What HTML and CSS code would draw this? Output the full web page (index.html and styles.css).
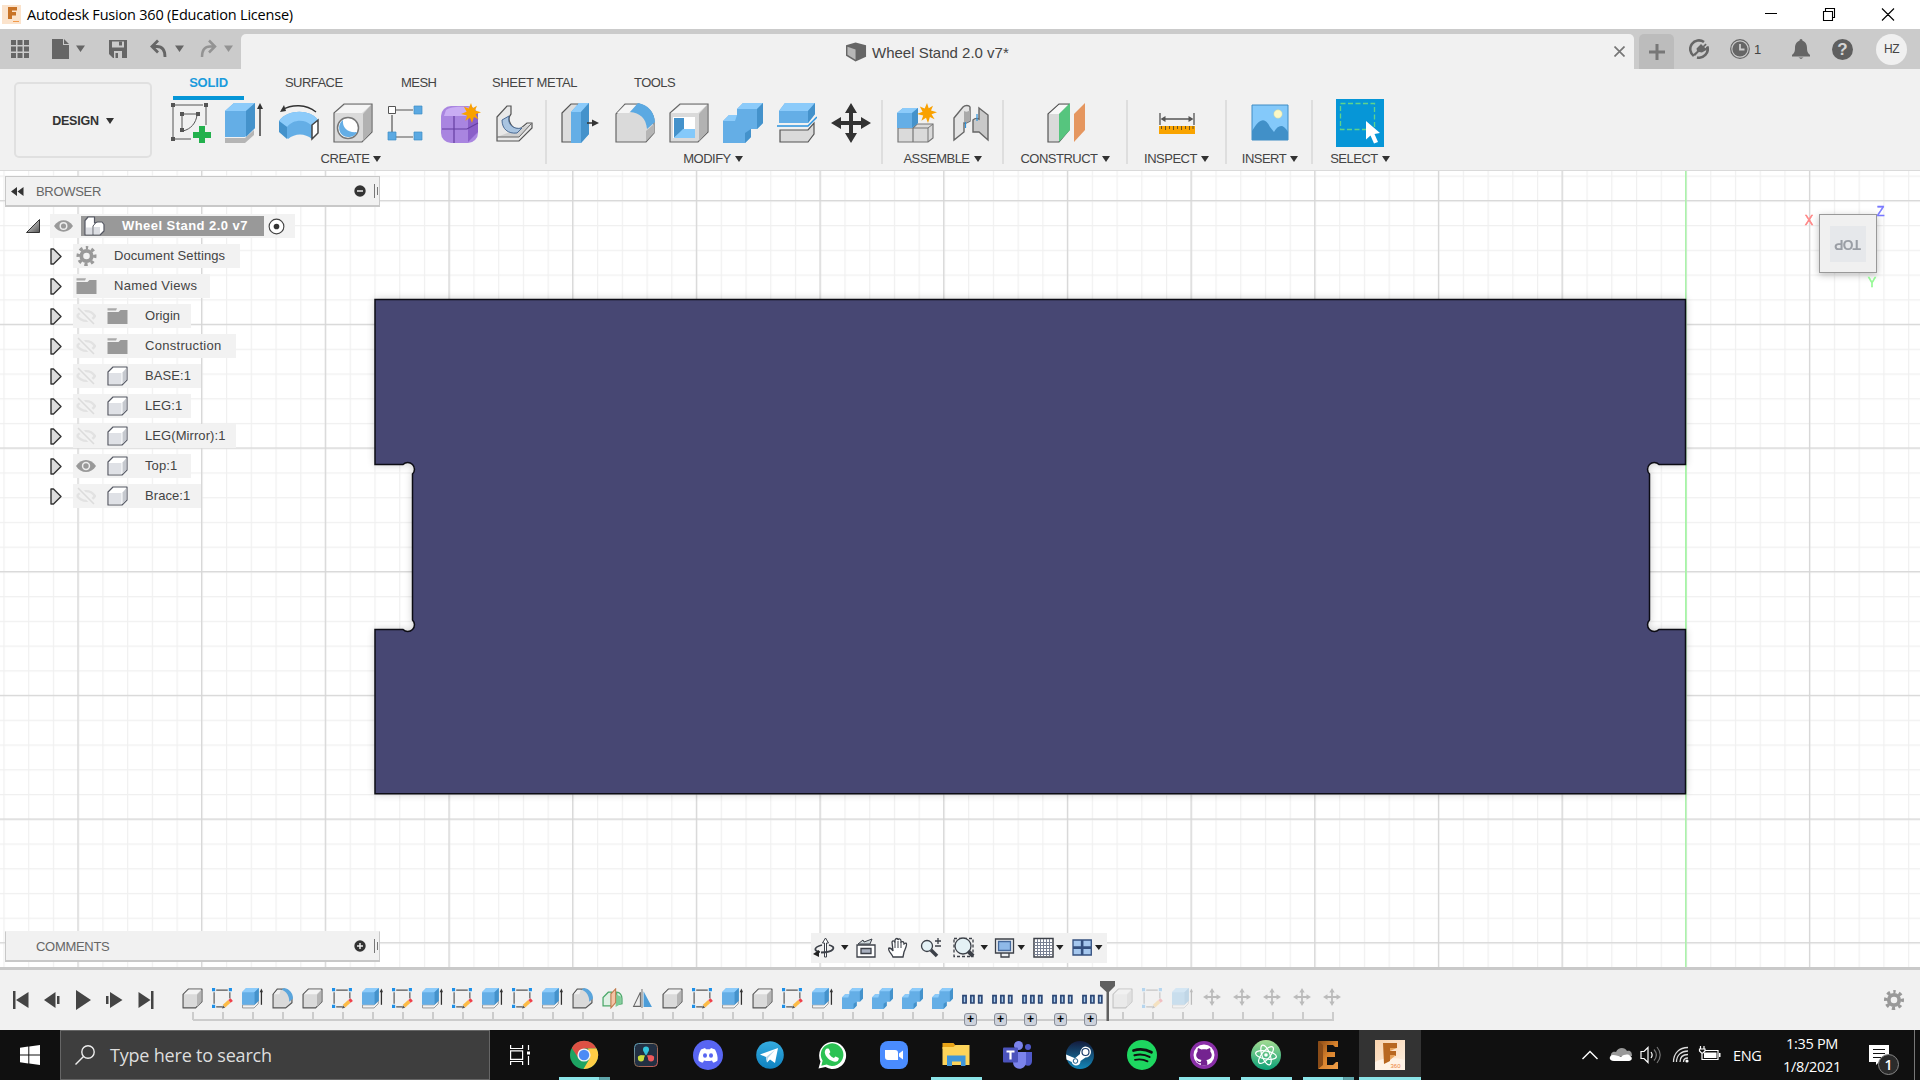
FILE: index.html
```html
<!DOCTYPE html>
<html lang="en">
<head>
<meta charset="utf-8">
<title>Autodesk Fusion 360 (Education License)</title>
<link rel="stylesheet" href="styles.css">
</head>
<body>
<svg class="defs" aria-hidden="true">
  <defs>
    <linearGradient id="gTri" x1="0" y1="0" x2="1" y2="1"><stop offset="0" stop-color="#eee"/><stop offset="1" stop-color="#555"/></linearGradient>
    <linearGradient id="gF" x1="0" y1="0" x2="1" y2="1"><stop offset="0" stop-color="#f9d3ae"/><stop offset="1" stop-color="#fdf0e2"/></linearGradient>
    <linearGradient id="gE" x1="0" y1="0" x2="1" y2="1"><stop offset="0" stop-color="#8a4a16"/><stop offset=".5" stop-color="#d8822c"/><stop offset="1" stop-color="#f0a04a"/></linearGradient>
    <linearGradient id="gTele" x1="0" y1="0" x2="0" y2="1"><stop offset="0" stop-color="#35ace0"/><stop offset="1" stop-color="#0f82c0"/></linearGradient>
    <linearGradient id="gSteam" x1="0" y1="0" x2="0" y2="1"><stop offset="0" stop-color="#141b3c"/><stop offset="1" stop-color="#1387b8"/></linearGradient>
    <linearGradient id="gAtom" x1="0" y1="0" x2="0" y2="1"><stop offset="0" stop-color="#a5dc92"/><stop offset="1" stop-color="#0aa077"/></linearGradient>
    <linearGradient id="gDv" x1="0" y1="0" x2="1" y2="1"><stop offset="0" stop-color="#5ba7c4"/><stop offset=".5" stop-color="#8a6a50"/><stop offset="1" stop-color="#d05a5a"/></linearGradient>
  </defs>
  <symbol id="star" viewBox="0 0 20 20"><path fill="#f9a100" d="M10 0l1.700 5.200L16 2.800l-2 4.600 6 1.800-5.400 2.100 3 4.900-4.700-2.200L11 20l-2-5.200-4.600 3 1.800-5.200L0 11l5.600-2.200L2.800 3.600l4.900 2z"/></symbol>
  <symbol id="t-box" viewBox="0 0 20 20"><path fill="#dadada" stroke="#555" stroke-width="1.100" stroke-linejoin="round" d="M1 6l5-5h13v12l-6 6H1z"/><path fill="#f3f3f3" d="M2 6l4.500-4.500h12L14 6z"/><path fill="#b5b5b5" d="M14.300 6.300l4.200-4.300v11l-4.200 5z"/></symbol>
  <symbol id="t-sketch" viewBox="0 0 20 20"><path fill="none" stroke="#555" stroke-width="1.100" d="M4 2h11M2 4v11M17 4v6M4 18h6"/><path fill="#1c8fe8" d="M0 0h3v3H0zM16 0h3v3h-3zM0 16h3v3H0z"/><path stroke="#fdbb45" stroke-width="3.400" d="M11.500 17.300l5-4.500"/><path stroke="#f0414b" stroke-width="3.400" d="M16.600 12.800l2.200-1.800"/><path fill="#555" d="M9.500 19.500l1-3 2 2.200z"/></symbol>
  <symbol id="t-ext" viewBox="0 0 20 20"><path fill="#f2f2f2" stroke="#888" stroke-width=".8" d="M.5 16h11l4-4v3l-4 4H.5z"/><path fill="#64aee6" d="M0 4l4-4h12v12l-4 4H0z"/><path fill="#8ccbfa" d="M0 4l4-4h12l-4 4z"/><path fill="#4492cb" d="M12 4l4-4v12l-4 4z"/><path stroke="#333" stroke-width="1.200" d="M18.500 3v13"/><path fill="#333" d="M16.800 4l1.700-3.500L20 4z"/></symbol>
  <symbol id="t-fillet" viewBox="0 0 20 20"><path fill="#dadada" stroke="#555" stroke-width="1.100" d="M1 6l4-5h6c5 1 8 5 8 9v4l-6 5H1z"/><path fill="#f0f0f0" d="M1.800 6l3.500-4.300h3L7 6z"/><path fill="#5aa5dc" d="M9 1.500L11.500 0C17 1 20 5 20 10l-3.500 3c0-5-2.500-9.500-7.500-11.500z"/></symbol>
  <symbol id="t-plane" viewBox="0 0 20 20"><path fill="#dff0e4" stroke="#4aa869" stroke-width="1.200" d="M1 17V9l5-5h3v13zM14 16V4c3 0 5 3 5 6v5z"/><path fill="#7ccb96" d="M13 6l5 2v7l-5 3z"/><path fill="#f4c4a6" stroke="#c07a4c" d="M8.500 5.500L13 .8v13L8.500 19z"/></symbol>
  <symbol id="t-mirror" viewBox="0 0 20 20"><path fill="#eee" stroke="#666" d="M8 4v13.500H1.500z"/><path fill="#4d9dd8" d="M11 3l8 15h-8z"/><path stroke="#777" d="M9.500 1v18"/></symbol>
  <symbol id="t-comb" viewBox="0 0 20 20"><path fill="#64aee6" d="M0 9l3-3h4V3l3-3h10v10l-3 3h-3v4l-3 3H0z"/><path fill="#8ccbfa" d="M7 3l3-3h10l-3 3zM0 9l3-3h4l-1 3z"/><path fill="#4492cb" d="M17 3l3-3v10l-3 3zM11 15l3-2v4l-3 3z"/></symbol>
  <symbol id="t-pat" viewBox="0 0 20 20"><path fill="#a9cdf0" stroke="#2c4674" stroke-width="1.600" d="M.9 7.300h3v7h-3zM8.400 7.300h3v7h-3zM15.900 7.300h3v7h-3z"/></symbol>
  <symbol id="t-move" viewBox="0 0 40 40"><path fill="#333" d="M20 0l6 10h-4v8h8v-4l10 6-10 6v-4h-8v8h4l-6 10-6-10h4v-8h-8v4L0 20l10-6v4h8v-8h-4z"/></symbol>
  <symbol id="eye" viewBox="0 0 20 14"><path fill="#999" d="M0 7c5-8 15-8 20 0-5 8-15 8-20 0z"/><circle cx="10" cy="7" r="4.200" fill="#eee"/><circle cx="10" cy="7" r="2.700" fill="#999"/></symbol>
  <symbol id="eyeoff" viewBox="0 0 20 18"><path fill="none" stroke="#e2e2e2" stroke-width="2.400" d="M1 9c4-6 13-7 18 0-4 6-12 7-18 0"/><path stroke="#f2f2f2" stroke-width="5" d="M2 1l16 16"/><path stroke="#dcdcdc" stroke-width="1.600" d="M2 1l16 16"/></symbol>
  <symbol id="folder" viewBox="0 0 20 16"><path fill="#999" d="M0 4h11l2-2h7v14H0z"/><path fill="#aaa" d="M0 .2h9.500L8.500 2.500H0z"/></symbol>
  <symbol id="gear" viewBox="0 0 20 20"><path fill="none" stroke="#999" stroke-width="3.400" stroke-dasharray="3.300 3.300" stroke-dashoffset="1.650" d="M10 1.700a8.300 8.300 0 1 1 0 16.600a8.300 8.300 0 1 1 0-16.600"/><circle cx="10" cy="10" r="5.200" fill="none" stroke="#999" stroke-width="3.800"/></symbol>
  <symbol id="comp" viewBox="0 0 21 20"><path fill="#fff" stroke="#555863" stroke-width="1.200" stroke-linejoin="round" d="M1 6l5-5h14v13l-5 5H1z"/><path fill="#dfe1e6" d="M2 7h12.500v11H2z"/><path fill="#c6c9cf" d="M15.500 6.500L19.400 2v12l-3.900 4z"/></symbol>
  <symbol id="tri" viewBox="0 0 12 17"><path fill="#ddd" stroke="#333" stroke-width="1.400" stroke-linejoin="round" d="M1 1h2.500L11 8.500 3.500 16H1z"/></symbol>
</svg>

<header class="titlebar">
  <svg class="app-icon" viewBox="0 0 19 19"><rect width="19" height="19" fill="#fbe3cc"/><path fill="#c87327" d="M6 2h9v3.500h-5V7h4v3.500h-4V14H6z"/><path stroke="#f29a4a" d="M11 16.500h6"/></svg>
  <span class="app-title">Autodesk Fusion 360 (Education License)</span>
  <svg class="win-buttons" width="130" height="14" viewBox="0 0 130 14"><path fill="none" stroke="#000" stroke-width="1.100" d="M0 6.500h12M58.500 4.500h9v9h-9zM60.500 4V1.500h9v9H68M117 1.500l12 12M129 1.500l-12 12"/></svg>
</header>

<div class="strip">
  <div class="quick">
    <svg width="242" height="40" viewBox="0 0 242 40"><g fill="#666"><path d="M11 11h5v5h-5zM17.500 11h5v5h-5zM24 11h5v5h-5zM11 17.500h5v5h-5zM17.500 17.500h5v5h-5zM24 17.500h5v5h-5zM11 24h5v5h-5zM17.500 24h5v5h-5zM24 24h5v5h-5z"/><path d="M52 10h11v6h6v14H52zM64 10l5 5h-5z"/><path d="M76 16.500h9l-4.500 6.500zM175 16.500h9l-4.500 6.500z"/><path fill-rule="evenodd" d="M109 11h18v18h-14l-4-4zM112 12.500v6h12v-6zM114 22v7h8v-7z"/><path d="M115.500 24h2.500v5h-2.500zM119 12.500h3v4h-3z"/></g><path fill="none" stroke="#666" stroke-width="2.800" d="M158 11.500l-6 6 6 6M152 17.500h5c6 0 8 4 8 10.500"/><g opacity=".55"><path fill="none" stroke="#666" stroke-width="2.500" d="M209 11.500l6 6-6 6M215 17.500h-5c-6 0-8 4-8 10.500"/><path fill="#666" d="M224 16.500h9l-4.500 6.500z"/></g></svg>
  </div>
  <div class="doc-tab">
    <svg width="21" height="20" viewBox="0 0 22 20"><path fill="#666" d="M0 3l10-3 11 3v12l-11 5L0 14z"/><path fill="#b7b7b7" d="M1.500 4.500l8.500 3v10.500l-8.500-5z"/></svg>
    <span>Wheel Stand 2.0 v7*</span>
    <svg class="tab-close" width="11" height="11" viewBox="0 0 11 11"><path stroke="#777" stroke-width="1.700" d="M.5.5l10 10M10.500.5l-10 10"/></svg>
  </div>
  <div class="add-tab"><svg width="16" height="16" viewBox="0 0 16 16"><path stroke="#777" stroke-width="3" d="M8 0v16M0 8h16"/></svg></div>
  <div class="account">
    <svg class="ic-ext" width="20" height="20" viewBox="0 0 20 20"><path fill="none" stroke="#666" stroke-width="2.600" d="M4.800 17A8.600 8.600 0 1 1 15 3M18.300 7.500A8.600 8.600 0 0 1 8 18.400"/><path fill="#666" d="M7.500 9.500L12 5l2 2 2.500-2.500 1.200 1.200L15.200 8l1.200 1.200 2-2 1 1.300-2 2.500-4.500 2.500-3-.5L6 17l-2-1.500 4-3.500z"/></svg>
    <svg class="ic-clock" width="20" height="20" viewBox="0 0 20 20"><circle cx="10" cy="10" r="9.300" fill="none" stroke="#666" stroke-width="1.200"/><circle cx="10" cy="10" r="7.600" fill="#666"/><path fill="none" stroke="#ccc" stroke-width="1.800" d="M10 5v5.500h4.500"/></svg>
    <span class="jobs">1</span>
    <svg class="ic-bell" width="18" height="20" viewBox="0 0 18 20"><path fill="#666" d="M9 0c1 0 1.500.8 1.500 1.800C14 3 15 6 15 9c0 4 1 5 3 7v1.500H0V16c2-2 3-3 3-7 0-3 1-6 4.500-7.200C7.500.800 8 0 9 0zM6.500 18.500h5L9 20z"/></svg>
    <span class="help">?</span>
    <span class="avatar">HZ</span>
  </div>
</div>

<div class="ribbon">
  <div class="workspace">DESIGN<i class="caret"></i></div>
  <div class="ribbon-main">
    <nav class="tabs"><b class="tab solid">SOLID</b><span class="tab surface">SURFACE</span><span class="tab mesh">MESH</span><span class="tab sheet">SHEET METAL</span><span class="tab">TOOLS</span></nav>
    <div class="groups">
      <section class="group create">
        <div class="tools">
          <svg viewBox="0 0 40 40"><path fill="none" stroke="#555" d="M4 2h28M2 4v30M35 4v18M4 36h16M11 13v12M13 11h12M26 12c-1 8-6 14-14 16"/><path fill="#555" d="M0 0h4v4H0zM33 0h4v4h-4zM0 34h4v4H0zM9 9h4v4H9zM25 9h4v4h-4zM9 25h4v4H9z"/><path stroke="#23b14d" stroke-width="6" d="M31 23v18M22 32h18"/></svg>
          <svg viewBox="0 0 40 40"><path fill="#b5b5b5" d="M0 35h20l9-8v5l-9 8H0z"/><path fill="#64aee6" d="M0 8l9-8h21v25l-10 9H0z"/><path fill="#8ccbfa" d="M0 8l9-8h21l-9 8z"/><path fill="#4492cb" d="M21 8l9-8v25l-9 9z"/><path stroke="#333" stroke-width="1.400" d="M35 3v30"/><path fill="#333" d="M32 6l3-6 3 6z"/></svg>
          <svg viewBox="0 0 40 40"><path fill="none" stroke="#333" stroke-width="1.400" d="M3 7C13 1 27 1 37 9"/><path fill="#333" d="M1 9l4-7 2 6z"/><path fill="#64aee6" d="M0 18C9 6 31 6 39 17l-6 19c-7-6-17-6-24 0l-9-8z"/><path fill="#8ccbfa" d="M0 18C9 6 31 6 39 17l-7 5c-6-6-18-6-24 2z"/><path fill="#4492cb" d="M0 18l8 6v12l-8-7z"/><path fill="#fff" stroke="#444" stroke-width="1.500" d="M33 22l6-5v13l-6 6z"/></svg>
          <svg viewBox="0 0 40 40"><path fill="#dadada" stroke="#666" stroke-width="1.200" d="M1 10L11 1h28v28L29 39H1z"/><path fill="#f5f5f5" d="M2 10L12 2h26l-9 8z"/><path fill="#b2b2b2" d="M30 11l8-9v27l-8 9z"/><circle cx="15" cy="25" r="10.500" fill="#fff" stroke="#777" stroke-width="1.500"/><path fill="#64aee6" d="M10 17c-1 8 5 13 14 12-2 4-5 5-9 5-9 0-12-12-5-17z"/></svg>
          <svg viewBox="0 0 40 40"><path stroke="#555" stroke-width="1.200" d="M9 7h17M5 12v17M9 34h17"/><path fill="#fff" stroke="#555" d="M1.500 3.500h7v7h-7z"/><path fill="#5ba9e2" stroke="#3e8cc4" stroke-width=".7" d="M27 3h8v8h-8zM1 29h8v8H1zM27 29h8v8h-8z"/></svg>
          <svg viewBox="0 0 40 40"><rect x="0" y="3" width="37" height="37" rx="10" fill="#a985e0"/><path fill="#c9adf3" d="M5 7c5-4 18-4 25-2l-5 8H3z"/><path fill="#8a5fc9" d="M27 14l10-5v20l-10 10z"/><path fill="none" stroke="#653ea0" stroke-width="1.200" d="M1 26h25l11-6M13 13v27"/><use href="#star" x="20" y="0" width="20" height="20"/></svg>
          <svg viewBox="0 0 40 40"><path fill="#e8e8e8" stroke="#555" stroke-width="1.200" d="M2 14L12 3h4v8c-5 6 1 16 9 15l7-6h5v5L24 38H2z"/><path fill="#d0d0d0" stroke="#666" d="M2 34h22l12-13"/><path fill="#a9c4e0" stroke="#4b6b94" d="M7 17c0 9 6 14 15 13l5-5c-9 2-15-4-13-12z"/></svg>
        </div>
        <div class="label">CREATE<i class="caret"></i></div>
      </section>
      <section class="group modify">
        <div class="tools">
          <svg viewBox="0 0 40 40"><path fill="#ddd" stroke="#555" stroke-width="1.200" d="M1 10l9-9h7v38H1z"/><path fill="#64aee6" d="M10 9l8-9h10v31l-8 9H10z"/><path fill="#8ccbfa" d="M10 9l8-9h10l-8 9z"/><path fill="#4492cb" d="M20 9l8-9v31l-8 9z"/><path stroke="#333" stroke-width="1.500" d="M26 20h7"/><path fill="#333" d="M31 16.500l7 3.500-7 3.500z"/></svg>
          <svg viewBox="0 0 40 40"><path fill="#dadada" stroke="#666" stroke-width="1.200" d="M1 11L10 1h14c10 3 15 10 15 18v11l-8 9H1z"/><path fill="#f5f5f5" d="M2 10l8-8h12l-8 8z"/><path fill="#b5b5b5" d="M31 28l8-7v9l-8 8z"/><path fill="#5ba9e2" d="M15 9l8-9c10 2 16 8 17 19l-8 7c-1-11-7-16-17-17z"/></svg>
          <svg viewBox="0 0 40 40"><path fill="#dadada" stroke="#666" stroke-width="1.200" d="M1 10L11 1h28v28L29 39H1z"/><path fill="#f5f5f5" d="M2 10L12 2h26l-9 8z"/><path fill="#b2b2b2" d="M30 11l8-9v27l-8 9z"/><path fill="#fff" d="M4 14h22v21H4z"/><path fill="#4492cb" d="M5 15h10v11L5 35z"/><path fill="#84c9fa" d="M5 35l9-9h12v9z"/></svg>
          <svg viewBox="0 0 20 20"><use href="#t-comb"/></svg>
          <svg viewBox="0 0 40 40"><path fill="#64aee6" d="M2 8l6-8h30v11l-7 9H2z"/><path fill="#8ccbfa" d="M2 8l6-8h30l-7 8z"/><path fill="#4492cb" d="M31 8l7-8v11l-7 9z"/><path fill="none" stroke="#2d93dd" stroke-width="1.500" d="M0 23h31l9-9"/><path fill="#dadada" stroke="#555" stroke-width="1.200" d="M3 27h28l6-7v11l-6 8H3z"/></svg>
          <svg viewBox="0 0 40 40"><use href="#t-move"/></svg>
        </div>
        <div class="label">MODIFY<i class="caret"></i></div>
      </section>
      <section class="group assemble">
        <div class="tools">
          <svg viewBox="0 0 40 40"><path fill="#dadada" stroke="#777" stroke-width="1.200" d="M1 25h15v14H1zM16 25l4-4h16v14l-5 4H16z"/><path fill="none" stroke="#777" d="M16 25h15l5-4M31 25v14"/><path fill="#64aee6" d="M0 10l6-5h15v15l-6 5H0z"/><path fill="#8ccbfa" d="M0 10l6-5h15l-6 5z"/><path fill="#4492cb" d="M15 10l6-5v15l-6 5z"/><use href="#star" x="20" y="0" width="20" height="20"/></svg>
          <svg viewBox="0 0 40 40"><path fill="#e4e4e4" stroke="#666" stroke-width="1.400" d="M3 15l9-11c2-2 6-2 7 0v14l-4 2h-2v9L3 37z"/><path fill="#aaa" d="M13 8c2 1 4 1 6-1v11l-4 2-2-1z"/><path fill="#c9c9c9" stroke="#666" stroke-width="1.400" d="M28 5l9 7v25l-9-8h-6V17c2-2 4-2 6-1z"/><path stroke="#2d93dd" stroke-width="1.200" d="M14.500 19v6M26 11v7"/></svg>
        </div>
        <div class="label">ASSEMBLE<i class="caret"></i></div>
      </section>
      <section class="group construct">
        <div class="tools"><svg viewBox="0 0 40 40"><path fill="#dadada" stroke="#555" stroke-width="1.200" d="M1 11L12 1h10v26L12 39H1z"/><path fill="#f8f8f8" d="M2 11L12 2h9l-9 9z"/><path fill="#56c57e" d="M12 11L23 0v27L12 39z"/><path fill="#e5965f" d="M27 11L38 0v27L27 39z"/></svg></div>
        <div class="label">CONSTRUCT<i class="caret"></i></div>
      </section>
      <section class="group inspect">
        <div class="tools"><svg viewBox="0 0 40 40"><path stroke="#555" stroke-width="1.300" d="M3 10v12M37 10v12M5 16h30"/><path fill="#555" d="M3.500 16l5-3v6zM36.500 16l-5-3v6z"/><path fill="#f9a400" d="M2 23h36v8H2z"/><path stroke="#6d5320" d="M4.500 23v3M8.500 23v4M12.500 23v3M16.500 23v4M20.500 23v3M24.500 23v4M28.500 23v3M32.500 23v4M36 23v3"/></svg></div>
        <div class="label">INSPECT<i class="caret"></i></div>
      </section>
      <section class="group insert">
        <div class="tools"><svg viewBox="0 0 40 40"><path fill="#84c9fa" stroke="#3e8cc4" d="M2 2h36v35H2z"/><circle cx="28" cy="11" r="4.200" fill="#fcf8c6" stroke="#cfd6a0" stroke-width=".5"/><path fill="#4190c8" d="M2 28c7-12 13-15 18-4l4 5c4-7 9-9 14 0v8H2z"/></svg></div>
        <div class="label">INSERT<i class="caret"></i></div>
      </section>
      <section class="group select">
        <div class="tools"><svg class="select-icon" viewBox="0 0 48 48"><path fill="#0696d7" d="M0 0h48v48H0z"/><path fill="none" stroke="#5fd38b" stroke-width="1.300" stroke-dasharray="5 2.500" d="M4.500 4.500h34v26h-34z"/><path fill="#fff" d="M30 22l14 12-5.500 1 3.500 8-4 1.500-3.500-8-4.500 4z"/></svg></div>
        <div class="label">SELECT<i class="caret"></i></div>
      </section>
    </div>
  </div>
</div>

<main class="viewport">
  <svg class="scene" width="1920" height="796" viewBox="0 0 1920 796">
    <defs>
      <pattern id="minor" x="77.600" y="29.300" width="24.736" height="24.736" patternUnits="userSpaceOnUse"><path fill="#f0f0f0" d="M0 0h24.736v1.200H0zM0 0h1.200v24.736H0z"/></pattern>
      <pattern id="major" x="77.400" y="29.100" width="123.680" height="123.680" patternUnits="userSpaceOnUse"><path fill="#d6d6d6" d="M0 0h123.680v1.300H0zM0 0h1.300v123.680H0z"/></pattern>
      <filter id="soft" x="-5%" y="-5%" width="110%" height="110%"><feGaussianBlur stdDeviation="4"/></filter>
    </defs>
    <path fill="url(#minor)" d="M0 0h1920v796H0z"/>
    <path fill="url(#major)" d="M0 0h1920v796H0z"/>
    <path stroke="#a6f5a6" stroke-width="1.400" d="M1685.800 0v796"/>
    <path filter="url(#soft)" fill="#000" opacity=".22" d="M375 128.500H1685.500V293.500H1659A6 6 0 1 0 1649.500 303V449A6 6 0 1 0 1659 458.500H1685.500V622.700H375V458.500H403A6 6 0 1 0 412.500 449V303A6 6 0 1 0 403 293.500H375z"/>
    <path stroke="#a6f5a6" stroke-width="1.400" d="M1685.800 293v166"/>
    <path fill="#474773" stroke="#0c0c14" stroke-width="1.500" d="M375 128.500H1685.500V293.500H1659A6 6 0 1 0 1649.500 303V449A6 6 0 1 0 1659 458.500H1685.500V622.700H375V458.500H403A6 6 0 1 0 412.500 449V303A6 6 0 1 0 403 293.500H375z"/>
  </svg>

  <div class="panel browser">
    <svg width="13" height="9" viewBox="0 0 13 9"><path fill="#333" d="M6 0v9L0 4.500zM12.500 0v9l-6-4.500z"/></svg><span>BROWSER</span>
    <svg class="pm" width="24" height="14" viewBox="0 0 24 14"><circle cx="6" cy="7" r="5.700" fill="#333"/><path stroke="#eee" stroke-width="1.500" d="M3 7h6"/><path stroke="#777" d="M20.500 0v14M23.500 3v8"/></svg>
  </div>
  <div class="tree">
    <div class="row root"><svg class="open" viewBox="0 0 14 14"><path fill="url(#gTri)" stroke="#333" d="M13.500.5v13H.5z"/></svg><div class="cell"><svg class="eye" viewBox="0 0 20 14"><use href="#eye"/></svg><div class="picked"><svg width="21" height="20" viewBox="0 0 21 20"><path fill="#fff" stroke="#555863" stroke-width="1.200" stroke-linejoin="round" d="M1 4.500L4 1h6.500v6l3-1H18l2 2.500V15l-4 4H1z"/><path fill="#dcdee3" d="M2 11.500h6.500v6.500H2zM10 11h6v7h-6z"/><path fill="none" stroke="#555863" d="M9 19v-9l3-3.500"/></svg><b>Wheel Stand 2.0 v7</b></div><svg class="radio" viewBox="0 0 18 18"><circle cx="9" cy="9" r="7.800" fill="#fff" stroke="#444" stroke-width="1.200"/><circle cx="9" cy="9" r="3" fill="#333"/></svg></div></div>
    <div class="row w167"><svg class="tri"><use href="#tri"/></svg><div class="cell"><svg class="ic20"><use href="#gear"/></svg><span>Document Settings</span></div></div>
    <div class="row w137"><svg class="tri"><use href="#tri"/></svg><div class="cell"><svg class="ic16"><use href="#folder"/></svg><span class="wide">Named Views</span></div></div>
    <div class="row w118"><svg class="tri"><use href="#tri"/></svg><div class="cell"><svg class="off"><use href="#eyeoff"/></svg><svg class="ic16"><use href="#folder"/></svg><span>Origin</span></div></div>
    <div class="row w163"><svg class="tri"><use href="#tri"/></svg><div class="cell"><svg class="off"><use href="#eyeoff"/></svg><svg class="ic16"><use href="#folder"/></svg><span class="wide">Construction</span></div></div>
    <div class="row w128"><svg class="tri"><use href="#tri"/></svg><div class="cell"><svg class="off"><use href="#eyeoff"/></svg><svg class="ic20"><use href="#comp"/></svg><span>BASE:1</span></div></div>
    <div class="row w118"><svg class="tri"><use href="#tri"/></svg><div class="cell"><svg class="off"><use href="#eyeoff"/></svg><svg class="ic20"><use href="#comp"/></svg><span>LEG:1</span></div></div>
    <div class="row w163"><svg class="tri"><use href="#tri"/></svg><div class="cell"><svg class="off"><use href="#eyeoff"/></svg><svg class="ic20"><use href="#comp"/></svg><span>LEG(Mirror):1</span></div></div>
    <div class="row w118"><svg class="tri"><use href="#tri"/></svg><div class="cell"><svg class="off"><use href="#eye"/></svg><svg class="ic20"><use href="#comp"/></svg><span>Top:1</span></div></div>
    <div class="row w128"><svg class="tri"><use href="#tri"/></svg><div class="cell"><svg class="off"><use href="#eyeoff"/></svg><svg class="ic20"><use href="#comp"/></svg><span>Brace:1</span></div></div>
  </div>

  <div class="panel comments">
    <span>COMMENTS</span>
    <svg class="pm" width="24" height="14" viewBox="0 0 24 14"><circle cx="6" cy="7" r="5.700" fill="#333"/><path stroke="#eee" stroke-width="1.500" d="M3 7h6M6 4v6"/><path stroke="#777" d="M20.500 0v14M23.500 3v8"/></svg>
  </div>

  <div class="navbar">
    <svg width="296" height="30" viewBox="0 0 296 30">
      <g fill="none" stroke="#3c4048" stroke-width="1.300"><path d="M13.500 24V10h-2l3-5 3 5h-2v14z" fill="#fff" stroke-width="1"/><path d="M11 12c-8 2-9 6-2 7M18 12c8 2 5 7-8 7.500" stroke-width="1.800"/><path fill="#fff" d="M46 12h18v12H46z"/><path fill="#cfd8dc" d="M47 11l5-4 1 2 8-3-2 5z" stroke-width="1"/><path fill="#a9b0bf" d="M50 15.500h10v5H50z"/><path fill="#fff" d="M82 24c-1-3-6-7-4-9 2 0 3 1 4 3l-1-9c1-2 3-1 3 1V7c1-2 3-2 3 0 1-2 3-1 3 1v1c2-1 3 0 3 2l2-1c2 1-1 6-2 9l-1 5z"/><path stroke-width="1" d="M84 10v5M87 8v7M90 9v6"/><circle cx="116" cy="13" r="5.500" fill="#e4f1f5"/><path stroke-width="3.500" d="M120 17l6 6"/><path d="M124 8h6M127 5v6M124 13h6"/><path stroke-dasharray="3 2" d="M143 5.500h19v18h-19z"/><circle cx="152" cy="13" r="8" fill="#e4f1f5"/><path stroke-width="4" d="M157 18l5 5"/><path fill="#eef0f3" d="M184.500 6h18v14h-18zM190 20v4h8v-4"/><path fill="#8fb9e8" stroke="#45699c" d="M187.500 8.500h12v9h-12z"/><path fill="#fff" stroke-width="1.500" d="M223 5.500h19v18.500h-19z"/><path stroke-width="1" stroke="#788092" d="M226.500 6v17M229.500 6v17M232.500 6v17M235.500 6v17M238.500 6v17M223 9.500h18M223 12.500h18M223 15.500h18M223 18.500h18M223 21.500h18"/><path fill="#a5c7ee" stroke="#34507f" stroke-width="1.300" d="M262 7h8.500v7H262zM271.800 7h8.500v7h-8.500zM262 15.300h8.500V22H262zM271.800 15.300h8.500V22h-8.500z"/></g>
      <path fill="#222" d="M8 17l-6 4 6 3zM30 12h7.500l-3.700 5zM169.500 12h7.500l-3.700 5zM206.500 12h7.500l-3.700 5zM245 12h7.500l-3.700 5zM284 12h7.500l-3.700 5z"/>
    </svg>
  </div>

  <div class="viewcube"><div class="face">TOP</div><span class="ax x">X</span><span class="ax y">Y</span><span class="ax z">Z</span></div>
</main>

<div class="timeline">
  <svg class="playback" width="150" height="20" viewBox="0 0 150 20"><path fill="#444" d="M0 1h2.500v18H0zM15.500 2v16L3 10zM42.500 2v16L31 10zM44 6h2.500v8H44zM63 0v20l15-10zM93 6h2.500v8H93zM97 2v16l12.500-8zM125.500 2v16l12-8zM138 1h2.500v18H138z"/></svg>
  <div class="track">
    <div class="step"><svg><use href="#t-box"/></svg></div><div class="step"><svg><use href="#t-sketch"/></svg></div><div class="step"><svg><use href="#t-ext"/></svg></div><div class="step"><svg><use href="#t-fillet"/></svg></div><div class="step"><svg><use href="#t-box"/></svg></div><div class="step"><svg><use href="#t-sketch"/></svg></div><div class="step"><svg><use href="#t-ext"/></svg></div><div class="step"><svg><use href="#t-sketch"/></svg></div><div class="step"><svg><use href="#t-ext"/></svg></div><div class="step"><svg><use href="#t-sketch"/></svg></div><div class="step"><svg><use href="#t-ext"/></svg></div><div class="step"><svg><use href="#t-sketch"/></svg></div><div class="step"><svg><use href="#t-ext"/></svg></div><div class="step"><svg><use href="#t-fillet"/></svg></div><div class="step"><svg><use href="#t-plane"/></svg></div><div class="step"><svg><use href="#t-mirror"/></svg></div><div class="step"><svg><use href="#t-box"/></svg></div><div class="step"><svg><use href="#t-sketch"/></svg></div><div class="step"><svg><use href="#t-ext"/></svg></div><div class="step"><svg><use href="#t-box"/></svg></div><div class="step"><svg><use href="#t-sketch"/></svg></div><div class="step"><svg><use href="#t-ext"/></svg></div><div class="step"><svg><use href="#t-comb"/></svg></div><div class="step"><svg><use href="#t-comb"/></svg></div><div class="step"><svg><use href="#t-comb"/></svg></div><div class="step"><svg><use href="#t-comb"/></svg></div>
    <div class="step group-step"><svg><use href="#t-pat"/></svg><i>+</i></div><div class="step group-step"><svg><use href="#t-pat"/></svg><i>+</i></div><div class="step group-step"><svg><use href="#t-pat"/></svg><i>+</i></div><div class="step group-step"><svg><use href="#t-pat"/></svg><i>+</i></div><div class="step group-step"><svg><use href="#t-pat"/></svg><i>+</i></div>
    <div class="step later current"><svg><use href="#t-box"/></svg><svg class="marker" viewBox="0 0 15 40"><path fill="#606060" d="M0 0h15v5L9 11v29H6.500V11L0 5z"/></svg></div><div class="step later"><svg><use href="#t-sketch"/></svg></div><div class="step later"><svg><use href="#t-ext"/></svg></div><div class="step later mv"><svg><use href="#t-move"/></svg></div><div class="step later mv"><svg><use href="#t-move"/></svg></div><div class="step later mv"><svg><use href="#t-move"/></svg></div><div class="step later mv"><svg><use href="#t-move"/></svg></div><div class="step later mv"><svg><use href="#t-move"/></svg></div>
  </div>
  <svg class="tl-gear"><use href="#gear"/></svg>
</div>

<footer class="taskbar">
  <div class="start"><svg width="20" height="20" viewBox="0 0 20 20"><path fill="#fff" d="M0 2.800l8.300-1.200v8H0zM9.300 1.400L20 0v9.500H9.300zM0 10.500h8.300v8L0 17.300zM9.300 10.500H20V20L9.300 18.600z"/></svg></div>
  <div class="search"><svg width="20" height="20" viewBox="0 0 20 20"><circle cx="13" cy="7" r="6.200" fill="none" stroke="#eee" stroke-width="1.400"/><path stroke="#eee" stroke-width="1.400" d="M8.500 11.500L.5 19.500"/></svg><span>Type here to search</span></div>
  <div class="taskview"><svg width="20" height="20" viewBox="0 0 20 20"><path fill="none" stroke="#fff" stroke-width="1.200" d="M.6 0v3.500h12V0M.6 5.800h12v8.500H.6zM.6 20v-3.500h12V20M18.500 0v5M18.500 11v9"/><path fill="#fff" d="M17 6.500h3v3h-3z"/></svg></div>
  <div class="apps">
    <div class="app run stack"><svg viewBox="0 0 30 30"><circle cx="15" cy="15" r="14" fill="#1da462"/><path fill="#dd5144" d="M2.800 8A14 14 0 0 1 27.500 8.500H15l-6 9z"/><path fill="#ffcd46" d="M27.500 8.500A14 14 0 0 1 14.500 29l6.500-11-2-9.500z"/><circle cx="15" cy="15" r="6.600" fill="#f1f1f1"/><circle cx="15" cy="15" r="5.200" fill="#4c8bf5"/></svg></div>
    <div class="app"><svg viewBox="0 0 30 30"><rect x="3.500" y="3.500" width="23" height="23" rx="4" fill="#223043" stroke="url(#gDv)"/><path fill="#33bcd6" d="M15 15.500c-3-3-3-8 0-8s3 5 0 8z"/><circle cx="15" cy="9.500" r="3" fill="#33c4dc"/><path fill="#c9dd3c" d="M14 15.500c-1 5-6 6-7 3s3-4 7-3z"/><circle cx="10" cy="18.500" r="3" fill="#c9dd3c"/><path fill="#f0595c" d="M16 15.500c4-1 8 0 7 3s-6 2-7-3z"/><circle cx="20" cy="18.500" r="3" fill="#f0595c"/></svg></div>
    <div class="app"><svg viewBox="0 0 30 30"><circle cx="15" cy="15" r="15" fill="#5865f2"/><path fill="#fff" d="M8 9.500l4-1.500 1 1.300h4L18 8l4 1.500c2 4 3 7 2.500 11-2 1.500-3 2-4.500 2l-1-2c-3 .8-5 .8-8 0l-1 2c-1.500 0-3-.5-4.500-2C5 16.500 6 13.500 8 9.500z"/><ellipse cx="12" cy="15.500" rx="2" ry="2.200" fill="#5865f2"/><ellipse cx="18" cy="15.500" rx="2" ry="2.200" fill="#5865f2"/></svg></div>
    <div class="app"><svg viewBox="0 0 30 30"><circle cx="15" cy="15" r="13.800" fill="url(#gTele)"/><path fill="#fff" d="M5 14.500L23 8l-3 15-5-3.500-3 3-1-5.500z"/><path fill="#b5d6ea" d="M11 17l9-7-7 8-1 4.500z"/></svg></div>
    <div class="app"><svg viewBox="0 0 30 30"><path fill="#fff" d="M1.500 28.500l2-7A13.500 13.500 0 1 1 8.500 27z"/><path fill="#2bc253" d="M4.300 25.800l1.300-5A11.300 11.300 0 1 1 9.700 24.600z"/><path fill="#fff" d="M10.500 8.500c1 0 1.500 0 2 1.500l.8 2c-.3 1-1.300 1.300-1 2 1 2 2.500 3.200 4.500 4 .8 0 1-1.200 1.800-1.500l3.200 1.500c0 3-2 4-4 3.800-5-.8-9.500-5-10-9.300 0-2 1-4 2.700-4z"/></svg></div>
    <div class="app"><svg viewBox="0 0 30 30"><rect x="1" y="1" width="28" height="28" rx="8" fill="#4a8cff"/><path fill="#fff" d="M6 10h10c2 0 3 1 3 3v7H9c-2 0-3-1-3-3zM20 13.500l4-3v9l-4-3z"/></svg></div>
    <div class="app run"><svg viewBox="0 0 30 30"><path fill="#e8a317" d="M1.500 3h11l2.500 3-3 3H1.500z"/><path fill="#fdd45a" d="M1.500 7h11l2-2h14v20h-27z"/><path fill="#3f96da" d="M6 26V15.500h18.500V26h-4.500v-4.500h-9V26z"/></svg></div>
    <div class="app shift"><svg viewBox="0 0 30 30"><circle cx="16.500" cy="5.500" r="4.500" fill="#7b83eb"/><circle cx="26" cy="7" r="3" fill="#5059c9"/><path fill="#5059c9" d="M20 12h10v9c0 4-3 6-7 4z"/><path fill="#7b83eb" d="M11 12h13v10c0 9-13 9-13 0z"/><rect x="1" y="7.500" width="15" height="15" rx="1" fill="#4b53bc"/><path fill="#fff" d="M4.500 10.500h8v2H9.600v7H7.400v-7H4.500z"/></svg></div>
    <div class="app"><svg viewBox="0 0 30 30"><circle cx="15" cy="15" r="14" fill="url(#gSteam)"/><path fill="#fff" d="M1 14.500l9 3.800 5-4.300c0-3 2-7.500 5.500-7.500a5.500 5.500 0 0 1 0 11l-5 3.500c0 3-2 4.500-4.500 4.500-2 0-4-1.500-4.300-3.500L1.500 19.500z"/><circle cx="20.500" cy="12" r="3.500" fill="#fff" stroke="#1a3a68" stroke-width="1.200"/><circle cx="10.500" cy="21" r="2.300" fill="none" stroke="#1a5a88"/></svg></div>
    <div class="app"><svg viewBox="0 0 30 30"><circle cx="15" cy="15" r="15" fill="#1ed760"/><path fill="none" stroke="#101010" stroke-linecap="round" stroke-width="2.700" d="M6.500 10.500c6-1.800 12.500-1.200 18 1.800"/><path fill="none" stroke="#101010" stroke-linecap="round" stroke-width="2.200" d="M7.500 15.300c5-1.400 10.500-.8 15 1.600"/><path fill="none" stroke="#101010" stroke-linecap="round" stroke-width="1.800" d="M8 19.800c4.500-1 8.500-.6 12.500 1.600"/></svg></div>
    <div class="app run"><svg viewBox="0 0 30 30"><circle cx="15" cy="15" r="14" fill="#8a2fa8"/><circle cx="15" cy="15" r="10.500" fill="#fff"/><path fill="#742390" d="M9 8l3.500 1.500c2-.5 3.500-.5 5 0L21 8c.6 1.500.5 2.700.3 3.500 3.200 4 .8 8-4 8.500 1 1 1 2 1 5.500h-6.500V23c-3 .6-3.500-1-4.800-2.500 2-.2 2.500 2 4.800 1.200 0-.8.300-1.400.8-1.700-5-.7-7-4.500-4-8.500C8.500 10.500 8.500 9.500 9 8z"/></svg></div>
    <div class="app run"><svg viewBox="0 0 30 30"><circle cx="15" cy="15" r="15" fill="url(#gAtom)"/><g fill="none" stroke="#fff" stroke-width="1.200"><ellipse cx="15" cy="15" rx="4" ry="10.500" transform="rotate(-20 15 15)"/><ellipse cx="15" cy="15" rx="4" ry="10.500" transform="rotate(40 15 15)"/><ellipse cx="15" cy="15" rx="4" ry="10.500" transform="rotate(100 15 15)"/></g><circle cx="15" cy="15" r="1.800" fill="#fff"/></svg></div>
    <div class="app run stack"><svg viewBox="0 0 30 30"><path fill="url(#gE)" d="M5 1h20v6h-3l-2-2h-6v7h8v5h-8v8h6l3-3h2v7H5l2-3V4z"/><path fill="#8a4c18" d="M5 1l5 4v20l-5 4z"/></svg></div>
    <div class="app run active"><svg viewBox="0 0 30 30"><path fill="url(#gF)" d="M0 0h30v30H0z"/><path fill="#fff3e6" d="M0 22c9-5 20-5 30-2v10H0z"/><path fill="#b86720" d="M8 3h14v5h-7v3h6v5h-6v5l-6 3z"/><path fill="#e8a35c" d="M15 8h7l-7 3zM15 15h6l-6 5z"/><text x="15.500" y="28" font-size="6" font-family="Liberation Sans, sans-serif" fill="#ee8438">360</text></svg></div>
  </div>
  <div class="tray">
    <svg width="140" height="24" viewBox="0 0 140 24"><path fill="none" stroke="#fff" stroke-width="1.400" d="M.5 16L8 8.500l7.500 7.500"/><path fill="#999" d="M29 14c-1-5 3-6 5-5 2-5 9-5 11-1 4-1 5 2 5 5z"/><path fill="#fff" d="M32 18c-6 0-5-6-1-6 3 0 6 1 8 2 3-3 8-3 9-1 3 1 2 5-1 5z"/><path fill="none" stroke="#fff" stroke-width="1.200" d="M59 8.500h3l4-4v15l-4-4h-3zM69 9c1.500 2 1.500 4 0 6"/><path fill="none" stroke="#777" stroke-width="1.200" d="M72 6.500c3 3.500 3 7.500 0 11M75 4c4 5 4 11 0 16"/><path fill="none" stroke="#ddd" stroke-width="1.300" d="M91.500 19c0-9 6-14.500 14.500-14.500M94.500 19c0-7 5-11 11.500-11M98 19c0-5 3-7.500 8-7.500M101.500 19c0-2 1.500-4 4.500-4"/><circle cx="105" cy="18" r="1.600" fill="#fff"/><path fill="none" stroke="#fff" stroke-width="1.200" d="M123 7.500h13v9h-16v-6M118.500 3v3M122 3v3M117.500 6h5.500v2l-2 2h-1.500l-2-2z"/><path fill="#fff" d="M122 9.500h12.500V15H122zM137 10h1.500v4H137z"/></svg>
    <span class="lang">ENG</span>
    <div class="clock"><span>1:35 PM</span><span>1/8/2021</span></div>
    <div class="notice"><svg width="20" height="20" viewBox="0 0 20 20"><path fill="#fff" d="M0 0h20v17H10l-3 3v-3H0z"/><path stroke="#111" stroke-width="1.200" d="M4 4.500h12M4 8.500h12M4 12.500h8"/></svg><b>1</b></div>
  </div>
</footer>
</body>
</html>
```
FILE: styles.css
```css
* { box-sizing: border-box; }
body { margin: 0; width: 1920px; height: 1080px; overflow: hidden; display: flex; flex-direction: column; background: #f1f1f1; font-family: "Liberation Sans", Arial, sans-serif; font-size: 13px; color: #444; }
svg { display: block; flex: none; }
.defs { position: absolute; width: 0; height: 0; }
.caret { display: inline-block; border: 4px solid transparent; border-top: 6px solid #333; border-bottom: 0; }

.titlebar { height: 29px; flex: none; display: flex; align-items: center; background: #fff; padding: 0 25px 1px 2px; color: #000; font-family: "Open Sans", "Noto Sans", sans-serif; font-size: 14.500px; }
.app-icon { width: 19px; height: 19px; }
.app-title { margin-left: 6px; letter-spacing: -0.210px; white-space: nowrap; }
.win-buttons { margin-left: auto; }

.strip { height: 40px; flex: none; display: flex; align-items: flex-end; background: #cbcbcb; }
.quick { width: 241px; height: 40px; flex: none; overflow: hidden; }
.doc-tab { width: 1393px; height: 35px; display: flex; align-items: center; background: #f1f1f1; border-radius: 5px 5px 0 0; padding: 0 9px 0 605px; font-size: 15px; gap: 5px; }
.doc-tab span { flex: 1; padding-top: 1px; }
.add-tab { width: 35px; height: 35px; margin-left: 5px; background: #bcbcbc; border-radius: 5px 5px 0 0; display: flex; align-items: center; justify-content: center; }
.account { flex: 1; height: 40px; display: flex; align-items: center; padding-left: 15px; }
.ic-clock { margin-left: 21px; }
.jobs { margin-left: 4px; width: 9px; }
.ic-bell { margin-left: 29px; }
.help { width: 21px; height: 21px; margin-left: 22px; border-radius: 50%; background: #5f5f5f; color: #d5d5d5; font-weight: bold; font-size: 17px; line-height: 21px; text-align: center; }
.avatar { width: 31px; height: 31px; margin-left: 23px; border-radius: 50%; background: #f0f0f0; font-size: 12px; line-height: 31px; text-align: center; letter-spacing: -0.500px; }

.ribbon { height: 102px; flex: none; display: flex; border-bottom: 1px solid #dadada; }
.workspace { width: 138px; height: 76px; margin: 13px 12px 0 14px; border: 2px solid #e0e0e0; border-radius: 5px; display: flex; align-items: center; justify-content: center; gap: 7px; font-weight: bold; font-size: 12.500px; letter-spacing: -0.200px; color: #333; padding-top: 1px; }
.ribbon-main { flex: 1; }
.tabs { height: 31px; display: flex; align-items: flex-start; padding-left: 9px; letter-spacing: -0.550px; }
.tab { height: 31px; line-height: 28px; white-space: nowrap; }
.solid { width: 71px; text-align: center; color: #1a9bdc; border-bottom: 4px solid #0696d7; letter-spacing: -0.200px; }
.surface { margin-left: 41px; width: 116px; }
.mesh { width: 91px; }
.sheet { width: 142px; letter-spacing: -0.350px; }
.groups { display: flex; }
.group { height: 64px; border-right: 2px solid #dedede; }
.tools { height: 48px; display: flex; align-items: center; justify-content: center; gap: 14px; margin-top: -1px; }
.tools svg { width: 40px; height: 40px; }
.tools .select-icon { width: 48px; height: 48px; }
.label { display: flex; align-items: center; justify-content: center; gap: 4px; height: 22px; line-height: 22px; letter-spacing: -0.500px; margin-top: 1px; }
.create { width: 383px; padding-right: 7px; }
.create .tools { padding-left: 4px; }
.modify { width: 336px; padding-right: 2px; }
.modify .tools { padding-left: 6px; }
.assemble { width: 121px; }
.assemble .tools { padding-left: 2px; }
.construct { width: 124px; }
.construct .tools { padding-left: 3px; }
.inspect { width: 99px; }
.insert { width: 86px; padding-left: 2px; }
.insert .tools { padding-right: 1px; }
.select { width: 94px; border-right: 0; }

.viewport { height: 796px; flex: none; position: relative; background: #fff; }
.scene { position: absolute; left: 0; top: 0; }
.panel { position: absolute; left: 5px; width: 375px; height: 31px; background: #f1f1f1; border: 1px solid #c8c8c8; border-width: 1px 1px 2px 1px; display: flex; align-items: center; color: #666; letter-spacing: -0.300px; }
.browser { top: 5px; padding-left: 5px; }
.browser span { margin-left: 12px; }
.comments { top: 760px; padding-left: 30px; border-top-color: #f1f1f1; }
.pm { margin-left: auto; margin-right: 1px; }
.tree { position: absolute; left: 26px; top: 40px; display: flex; flex-direction: column; }
.row { height: 30px; display: flex; align-items: center; padding-left: 24px; }
.row .cell { height: 24px; margin-left: 11px; padding-left: 3px; background: #f2f2f2; display: flex; align-items: center; white-space: nowrap; }
.row.root { padding-left: 0; }
.root .cell { width: 245px; margin-left: 10px; padding-left: 4px; }
.open { width: 14px; height: 14px; }
.eye { width: 19px; height: 14px; }
.picked { height: 20px; width: 183px; margin: 0 4px 0 8px; padding-left: 3px; background: #999; color: #fff; display: flex; align-items: center; gap: 17px; letter-spacing: 0.450px; }
.picked b { padding-bottom: 1px; }
.radio { width: 17px; height: 17px; }
.tri { width: 12px; height: 17px; }
.ic20 { width: 21px; height: 20px; }
.ic16 { width: 21px; height: 16px; }
.off { width: 20px; height: 18px; margin-right: 11px; }
.cell span { margin-left: 17px; padding-bottom: 1px; letter-spacing: 0.080px; }
.cell .wide { letter-spacing: 0.300px; }
.w167 .cell { width: 167px; } .w137 .cell { width: 137px; } .w118 .cell { width: 118px; } .w163 .cell { width: 163px; } .w128 .cell { width: 128px; }
.navbar { position: absolute; left: 811px; top: 762px; background: #f1f1f1; }
.viewcube { position: absolute; left: 1819px; top: 43px; width: 58px; height: 59px; border: 1px solid #999; background: #f0f0f0; box-shadow: 0 2px 7px rgba(0,0,0,.25); display: flex; align-items: center; justify-content: center; }
.face { width: 36px; height: 36px; background: #e6e8eb; color: #9a9ea5; font-weight: bold; font-size: 14px; line-height: 34px; text-align: center; letter-spacing: -0.800px; transform: rotate(180deg); }
.ax { position: absolute; font-size: 15px; line-height: 15px; -webkit-text-stroke: 0.500px; transform: scaleX(.85); }
.x { left: -16px; top: -3px; color: #ff8585; } .y { left: 47px; top: 59px; color: #90f890; } .z { left: 56px; top: -12px; color: #7878ff; }

.timeline { height: 63px; flex: none; display: flex; border-top: 3px solid #c9c9c9; background: #f1f1f1; padding-left: 13px; }
.playback { margin-top: 20px; }
.track { margin-left: 14px; display: flex; }
.step { position: relative; width: 30px; height: 52px; padding: 18px 0 0 5px; background: linear-gradient(#ccc, #ccc) 0 49px / 100% 2px no-repeat, linear-gradient(#ccc, #ccc) 15px 42px / 2px 8px no-repeat; }
.step svg { width: 21px; height: 21px; }
.step:first-child { background-position: 16px 49px, 15px 42px; }
.step:last-child { background-size: 17px 2px, 2px 8px; }
.group-step { background-size: 100% 2px, 0 0; }
.group-step i { position: absolute; left: 7px; top: 43px; width: 13px; height: 13px; border: 1px solid #8c919b; border-radius: 3px; background: #cdd2dc; color: #000; font: bold 12px/10px "Liberation Sans", sans-serif; text-align: center; }
.later > svg:first-child { opacity: .28; }
.mv svg:first-child { width: 18px; height: 18px; margin-left: 1px; }
.step .marker { position: absolute; left: -7px; top: 11px; width: 15px; height: 40px; }
.tl-gear { width: 20px; height: 20px; margin: 20px 16px 0 auto; }

.taskbar { height: 50px; flex: none; display: flex; background: #101010; color: #fff; font-family: "Open Sans", "Noto Sans", sans-serif; }
.start { width: 60px; display: flex; align-items: center; justify-content: center; }
.search { width: 430px; background: #3e3e3e; border: 1px solid #666; display: flex; align-items: center; padding-left: 14px; gap: 15px; font-size: 18px; color: #ddd; letter-spacing: -0.200px; }
.taskview { width: 63px; display: flex; align-items: center; padding-left: 20px; }
.apps { display: flex; }
.app { width: 62px; display: flex; justify-content: center; align-items: center; background: no-repeat 6px 47px / 51px 3px; }
.app svg { width: 30px; height: 30px; }
.shift { padding-right: 2px; }
.run { background-image: linear-gradient(#8be4e8, #8be4e8); }
.stack { background-image: linear-gradient(90deg, #8be4e8 40px, #4e8a90 40px, #5fa5aa 41px); }
.active { background-color: #333; background-size: 100% 3px; background-position: 0 47px; }
.tray { margin-left: auto; display: flex; align-items: center; height: 50px; border-right: 1px solid #777; margin-right: 5px; padding-right: 15px; font-size: 14.500px; }
.lang { margin-left: 11px; width: 30px; letter-spacing: -0.400px; }
.clock { width: 78px; margin-left: 10px; display: flex; flex-direction: column; align-items: center; line-height: 23px; letter-spacing: -0.300px; padding-bottom: 1px; }
.notice { position: relative; margin-left: 18px; width: 30px; height: 20px; }
.notice b { position: absolute; left: 9px; top: 9px; width: 21px; height: 21px; border: 1px solid #888; border-radius: 50%; background: #2b2b2b; font-size: 14px; line-height: 19px; text-align: center; font-weight: 600; }
```
